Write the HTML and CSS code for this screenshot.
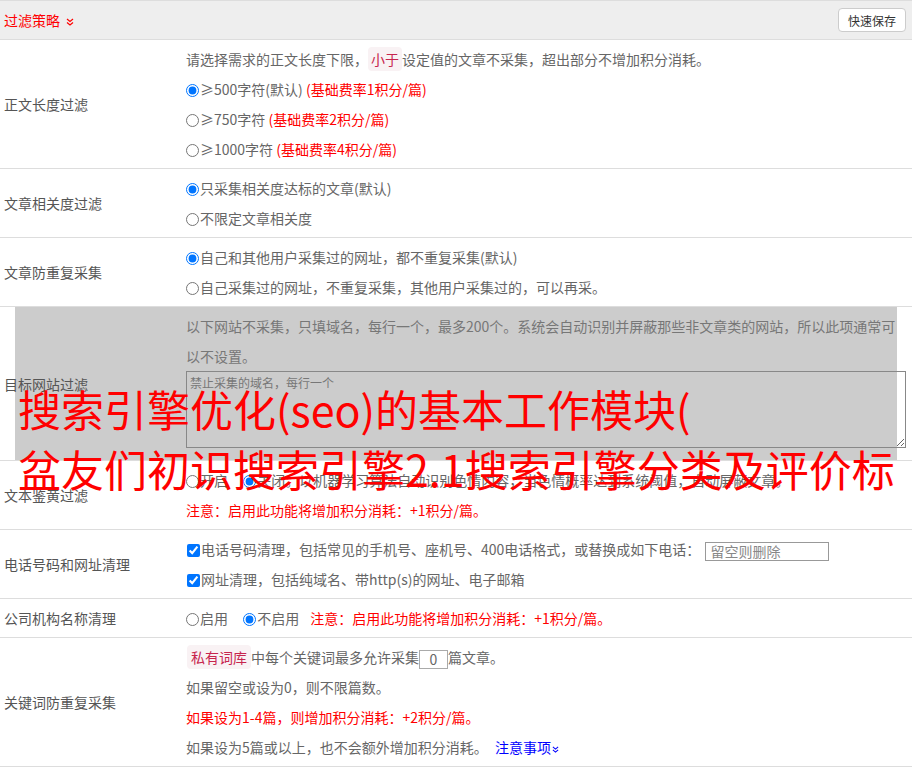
FILE: index.html
```html
<!DOCTYPE html>
<html lang="zh-CN">
<head>
    <meta charset="UTF-8">
    <meta name="viewport" content="width=device-width, initial-scale=1.0">
    <title>过滤策略</title>
    <link rel="stylesheet" href="styles.css">
</head>

<body>
    <div class="panel">
        <div class="panel_head">
            <span class="head_title">过滤策略
                <svg class="chev" viewBox="0 0 8 8"><polyline points="1,1 4,3.5 7,1" /><polyline points="1,4.5 4,7 7,4.5" /></svg>
            </span>
            <button class="btn_save" type="button">快速保存</button>
        </div>

        <!-- 正文长度 -->
        <div class="row">
            <div class="label">正文长度过滤</div>
            <div class="field">
                <div class="line">请选择需求的正文长度下限，<span class="tag">小于</span>设定值的文章不采集，超出部分不增加积分消耗。</div>
                <label class="line"><input type="radio" name="len" checked>≥500字符(默认) <span class="red">(基础费率1积分/篇)</span></label>
                <label class="line"><input type="radio" name="len">≥750字符 <span class="red">(基础费率2积分/篇)</span></label>
                <label class="line"><input type="radio" name="len">≥1000字符 <span class="red">(基础费率4积分/篇)</span></label>
            </div>
        </div>

        <div class="row">
            <div class="label">文章相关度过滤</div>
            <div class="field">
                <label class="line"><input type="radio" name="rel" checked>只采集相关度达标的文章(默认)</label>
                <label class="line"><input type="radio" name="rel">不限定文章相关度</label>
            </div>
        </div>

        <div class="row">
            <div class="label">文章防重复采集</div>
            <div class="field">
                <label class="line"><input type="radio" name="dup" checked>自己和其他用户采集过的网址，都不重复采集(默认)</label>
                <label class="line"><input type="radio" name="dup">自己采集过的网址，不重复采集，其他用户采集过的，可以再采。</label>
            </div>
        </div>

        <div class="row row_marked">
            <div class="label">目标网站过滤</div>
            <div class="field">
                <div class="line muted">以下网站不采集，只填域名，每行一个，最多200个。系统会自动识别并屏蔽那些非文章类的网站，所以此项通常可<br>以不设置。</div>
                <textarea class="domains" placeholder="禁止采集的域名，每行一个"></textarea>
            </div>
        </div>

        <div class="row">
            <div class="label">文本鉴黄过滤</div>
            <div class="field">
                <div class="line">
                    <label class="inl"><input type="radio" name="porn">开启</label>
                    <label><input type="radio" name="porn" checked>关闭。以机器学习算法自动识别色情内容，当色情概率达到系统阈值，自动屏蔽文章。</label>
                </div>
                <div class="line red">注意：启用此功能将增加积分消耗：+1积分/篇。</div>
            </div>
        </div>

        <div class="row">
            <div class="label">电话号码和网址清理</div>
            <div class="field">
                <div class="line">
                    <label><input type="checkbox" checked>电话号码清理，包括常见的手机号、座机号、400电话格式，或替换成如下电话：</label>
                    <input class="phone" type="text" placeholder="留空则删除">
                </div>
                <label class="line"><input type="checkbox" checked>网址清理，包括纯域名、带http(s)的网址、电子邮箱</label>
            </div>
        </div>

        <div class="row">
            <div class="label">公司机构名称清理</div>
            <div class="field">
                <div class="line">
                    <label class="inl"><input type="radio" name="org">启用</label>
                    <label class="inl_s"><input type="radio" name="org" checked>不启用</label>
                    <span class="red">注意：启用此功能将增加积分消耗：+1积分/篇。</span>
                </div>
            </div>
        </div>

        <div class="row">
            <div class="label">关键词防重复采集</div>
            <div class="field">
                <div class="line"><span class="tag tag_wide">私有词库</span>中每个关键词最多允许采集<input class="count" type="text" value="0">篇文章。</div>
                <div class="line">如果留空或设为0，则不限篇数。</div>
                <div class="line red">如果设为1-4篇，则增加积分消耗：+2积分/篇。</div>
                <div class="line">如果设为5篇或以上，也不会额外增加积分消耗。 <a class="more" href="#">注意事项<svg class="chev chev_s" viewBox="0 0 8 8"><polyline points="1,1 4,3.5 7,1" /><polyline points="1,4.5 4,7 7,4.5" /></svg></a></div>
            </div>
        </div>

        <div class="banner">
            <span>搜索引擎优化(seo)的基本工作模块(</span>
            <span>盆友们初识搜索引擎2.1搜索引擎分类及评价标</span>
        </div>
    </div>
</body>

</html>
```

FILE: styles.css
```css
body {
    margin: 0;
    font-family: "Noto Sans CJK SC", "Microsoft YaHei", sans-serif;
    font-size: 14px;
    color: #666;
    background: #fff;
}

.panel {
    position: relative;
}

.panel_head {
    display: flex;
    align-items: center;
    justify-content: space-between;
    height: 38px;
    padding: 0 6px 0 4px;
    background: #eee;
    border-top: 1px solid #ddd;
    border-bottom: 1px solid #ddd;
}

.head_title {
    color: #f00;
}

.chev {
    width: 8px;
    height: 8px;
    margin-left: 3px;
    fill: none;
    stroke: currentColor;
    stroke-width: 1.2;
}

.chev_s {
    width: 7px;
    height: 7px;
    margin-left: 1px;
}

.btn_save {
    height: 24px;
    padding: 0 9px;
    font-family: inherit;
    font-size: 12px;
    color: #333;
    background: #fff;
    border: 1px solid #ccc;
    border-radius: 4px;
}

.row {
    display: grid;
    grid-template-columns: 182px 1fr;
    align-items: center;
    border-bottom: 1px solid #ddd;
}

.row_marked {
    background: linear-gradient(#ccc, #ccc) 15px 0 / 882px 100% no-repeat;
}

.label {
    padding-left: 4px;
    color: #555;
}

.field {
    padding: 4px 6px 4px 4px;
    line-height: 30px;
}

.line {
    display: block;
    height: 30px;
    white-space: nowrap;
}

.muted {
    height: auto;
    color: #777;
    white-space: normal;
}

.red {
    color: #f00;
}

input[type=radio],
input[type=checkbox] {
    width: 13px;
    height: 13px;
    margin: 0 1px 0 0;
    vertical-align: -2px;
}

input[type=checkbox] {
    margin-left: 1px;
}

.inl {
    margin-right: 12px;
}

.inl_s {
    margin-right: 8px;
}

.tag {
    padding: 2px 3px;
    color: #c7254e;
    background: #f9f2f4;
    border-radius: 4px;
}

.tag_wide {
    padding: 2px 4px;
    margin-left: 1px;
}

.domains {
    display: block;
    box-sizing: border-box;
    width: 100%;
    height: 77px;
    margin: 0 0 8px;
    padding: 2px 3px;
    font-family: inherit;
    font-size: 12px;
    line-height: 18px;
    background: transparent;
    border: 1px solid #888;
    resize: vertical;
}

.domains::placeholder {
    color: #777;
}

.phone {
    box-sizing: border-box;
    width: 124px;
    height: 19px;
    margin-left: 2px;
    padding: 0 4px;
    font-family: inherit;
    font-size: 14px;
    border: 1px solid #999;
    vertical-align: middle;
}

.phone::placeholder {
    color: #888;
}

.count {
    box-sizing: border-box;
    width: 29px;
    height: 19px;
    padding: 0;
    font-family: inherit;
    font-size: 14px;
    color: #666;
    text-align: center;
    border: 1px solid #aaa;
    vertical-align: middle;
}

.more {
    margin-left: 4px;
    color: #00f;
    text-decoration: none;
}

.banner {
    position: absolute;
    top: 378px;
    left: 18px;
    right: 0;
    height: 120px;
    overflow: hidden;
    font-size: 43px;
    line-height: 60px;
    color: #f00;
}

.banner span {
    display: block;
    white-space: nowrap;
}
```
